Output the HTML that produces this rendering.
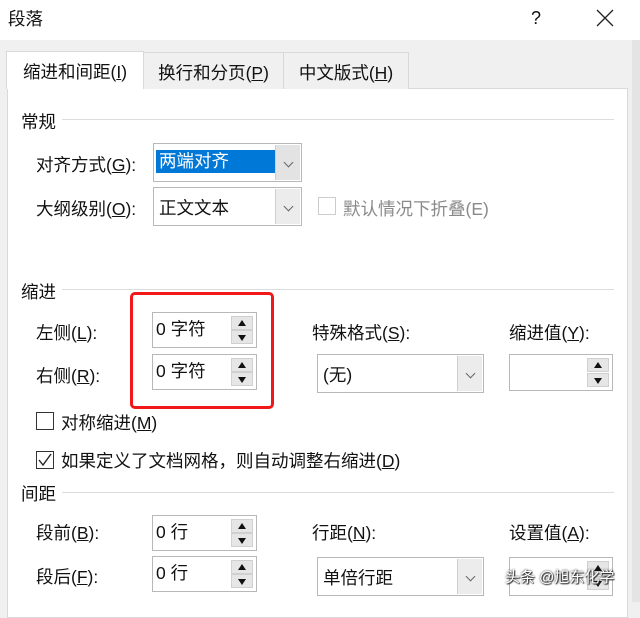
<!DOCTYPE html>
<html><head><meta charset="utf-8"><style>
*{margin:0;padding:0;box-sizing:border-box}
body{width:640px;height:602px;overflow:hidden;background:#f0f0f0;font-family:"Liberation Sans","Noto Sans CJK SC",sans-serif;font-size:17.5px;color:#111;position:relative}
.a{position:absolute;white-space:nowrap;line-height:20px;margin-top:2px}
.title{position:absolute;left:0;top:0;width:640px;height:40px;background:#fff}
.tab{position:absolute;top:52px;height:37px;border:1px solid #d9d9d9;border-bottom:none;background:#f0f0f0;padding:10px 0 0 0;text-align:center;line-height:20px}
.panel{position:absolute;left:7px;top:88px;width:621px;height:530px;background:#fff;border:1px solid #d9d9d9}
.line{position:absolute;height:1px;background:#dcdcdc}
.box{position:absolute;border:1px solid #b8b8b8;background:#fff}
.dd{position:absolute;right:1px;top:1px;bottom:1px;width:25px;background:#e3e3e3;border-left:1px solid #cfcfcf}
.dd:after{content:"";position:absolute;left:9px;top:40%;width:6px;height:6px;border-right:1px solid #666;border-bottom:1px solid #666;transform:rotate(45deg)}
.sp{position:absolute;right:3px;width:22px;height:14px;background:#e6e6e6;border:1px solid #d0d0d0}
.up:after{content:"";position:absolute;left:6px;top:3px;border-left:4px solid transparent;border-right:4px solid transparent;border-bottom:6px solid #111}
.dn:after{content:"";position:absolute;left:6px;top:4px;border-left:4px solid transparent;border-right:4px solid transparent;border-top:6px solid #111}
.cb{position:absolute;width:18px;height:18px;border:1px solid #333;background:#fff}
u{text-decoration:underline}
</style></head><body>
<div class="title"></div>
<div class="a" style="left:8px;top:7px">段落</div>
<div class="a" style="left:531px;top:6px;font-size:18px">?</div>
<svg style="position:absolute;left:596px;top:9px" width="18" height="18"><path d="M1 1L17 17M17 1L1 17" stroke="#222" stroke-width="1.3"/></svg>
<div style="position:absolute;left:632px;top:40px;width:8px;height:562px;background:#e4e4e4"></div>
<div class="panel"></div>
<div class="tab" style="left:6px;width:138px;background:#fff;height:38px;top:51px;z-index:2">缩进和间距(<u>I</u>)</div>
<div class="tab" style="left:143px;width:141px">换行和分页(<u>P</u>)</div>
<div class="tab" style="left:283px;width:126px">中文版式(<u>H</u>)</div>

<div class="a" style="left:21px;top:110px">常规</div><div class="line" style="left:62px;top:119px;width:552px"></div>
<div class="a" style="left:36px;top:153px">对齐方式(<u>G</u>):</div>
<div class="box" style="left:153px;top:143px;width:149px;height:39px"><div style="position:absolute;left:2px;top:6px;width:120px;height:23px;background:#0078d7;color:#fff;padding-left:3px;line-height:23px">两端对齐</div><div class="dd"></div></div>
<div class="a" style="left:36px;top:197px">大纲级别(<u>O</u>):</div>
<div class="box" style="left:153px;top:187px;width:149px;height:39px"><div class="a" style="left:5px;top:8px">正文文本</div><div class="dd" style="background:#ececec"></div></div>
<div class="cb" style="left:318px;top:197px;border-color:#ccc"></div>
<div class="a" style="left:343px;top:197px;color:#8a8a8a">默认情况下折叠(E)</div>

<div class="a" style="left:21px;top:280px">缩进</div><div class="line" style="left:62px;top:289px;width:552px"></div>
<div class="a" style="left:36px;top:321px">左侧(<u>L</u>):</div>
<div class="a" style="left:36px;top:364px">右侧(<u>R</u>):</div>
<div class="box" style="left:152px;top:312px;width:105px;height:36px"><div class="a" style="left:3px;top:4px">0 字符</div><div class="sp up" style="top:3px"></div><div class="sp dn" style="top:17px"></div></div>
<div class="box" style="left:152px;top:354px;width:105px;height:36px"><div class="a" style="left:3px;top:4px">0 字符</div><div class="sp up" style="top:3px"></div><div class="sp dn" style="top:17px"></div></div>
<div style="position:absolute;left:130px;top:292px;width:144px;height:117px;border:3px solid #f01818;border-radius:5px"></div>
<div class="a" style="left:312px;top:321px">特殊格式(<u>S</u>):</div>
<div class="a" style="left:509px;top:321px">缩进值(<u>Y</u>):</div>
<div class="box" style="left:317px;top:354px;width:167px;height:39px"><div class="a" style="left:5px;top:8px">(无)</div><div class="dd" style="background:#ececec"></div></div>
<div class="box" style="left:509px;top:354px;width:104px;height:37px"><div class="sp up" style="top:3px"></div><div class="sp dn" style="top:18px"></div></div>

<div class="cb" style="left:36px;top:412px"></div>
<div class="a" style="left:61px;top:411px">对称缩进(<u>M</u>)</div>
<div class="cb" style="left:36px;top:451px"><svg width="16" height="16" style="position:absolute;left:0;top:0"><path d="M2 8L6 13L14 2" stroke="#222" stroke-width="1.4" fill="none"/></svg></div>
<div class="a" style="left:61px;top:449px">如果定义了文档网格，则自动调整右缩进(<u>D</u>)</div>

<div class="a" style="left:21px;top:482px">间距</div><div class="line" style="left:62px;top:492px;width:552px"></div>
<div class="a" style="left:36px;top:521px">段前(<u>B</u>):</div>
<div class="a" style="left:36px;top:565px">段后(<u>F</u>):</div>
<div class="box" style="left:152px;top:515px;width:105px;height:36px"><div class="a" style="left:3px;top:4px">0 行</div><div class="sp up" style="top:3px"></div><div class="sp dn" style="top:17px"></div></div>
<div class="box" style="left:152px;top:556px;width:105px;height:36px"><div class="a" style="left:3px;top:4px">0 行</div><div class="sp up" style="top:3px"></div><div class="sp dn" style="top:17px"></div></div>
<div class="a" style="left:312px;top:521px">行距(<u>N</u>):</div>
<div class="a" style="left:509px;top:521px">设置值(<u>A</u>):</div>
<div class="box" style="left:317px;top:557px;width:167px;height:39px"><div class="a" style="left:5px;top:8px">单倍行距</div><div class="dd" style="background:#ececec"></div></div>
<div class="box" style="left:509px;top:557px;width:104px;height:39px"><div class="sp up" style="top:3px"></div><div class="sp dn" style="top:18px"></div></div>
<div class="a" style="left:505px;top:566px;font-size:15px;color:#fff;text-shadow:0 0 2px #000,1px 1px 1px #333">头条 @旭东化学</div>
</body></html>
